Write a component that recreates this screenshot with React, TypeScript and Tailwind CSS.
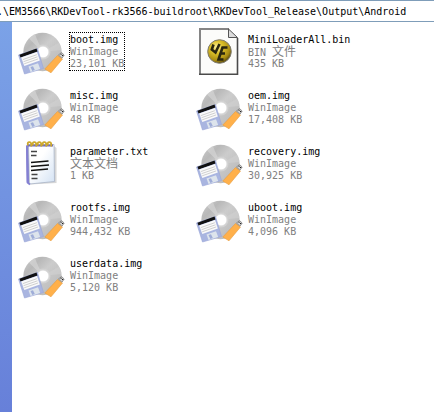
import { useState } from "react";

type Kind = "image" | "bin" | "text";
type FileEntry = { name: string; type: string; size: string; kind: Kind };

const files: FileEntry[] = [
  { name: "boot.img", type: "WinImage", size: "23,101 KB", kind: "image" },
  { name: "MiniLoaderAll.bin", type: "BIN 文件", size: "435 KB", kind: "bin" },
  { name: "misc.img", type: "WinImage", size: "48 KB", kind: "image" },
  { name: "oem.img", type: "WinImage", size: "17,408 KB", kind: "image" },
  { name: "parameter.txt", type: "文本文档", size: "1 KB", kind: "text" },
  { name: "recovery.img", type: "WinImage", size: "30,925 KB", kind: "image" },
  { name: "rootfs.img", type: "WinImage", size: "944,432 KB", kind: "image" },
  { name: "uboot.img", type: "WinImage", size: "4,096 KB", kind: "image" },
  { name: "userdata.img", type: "WinImage", size: "5,120 KB", kind: "image" },
];

function Gradients() {
  return (
    <svg className="absolute size-0" aria-hidden="true">
      <defs>
        <linearGradient id="disc" x1="0" y1="0" x2="1" y2="1">
          <stop offset="0" stopColor="#cdcdcd" />
          <stop offset="0.25" stopColor="#b8b8b8" />
          <stop offset="0.45" stopColor="#cccccc" />
          <stop offset="0.6" stopColor="#c6c6c6" />
          <stop offset="1" stopColor="#b4b4b4" />
        </linearGradient>
        <linearGradient id="paper" x1="0" y1="0" x2="1" y2="1">
          <stop offset="0.4" stopColor="#ffffff" />
          <stop offset="1" stopColor="#d3e2f4" />
        </linearGradient>
        <radialGradient id="ball" cx="0.38" cy="0.32" r="0.75">
          <stop offset="0" stopColor="#fff3a0" />
          <stop offset="0.35" stopColor="#dcc02a" />
          <stop offset="0.75" stopColor="#a88b12" />
          <stop offset="1" stopColor="#3c3208" />
        </radialGradient>
      </defs>
    </svg>
  );
}

function ImageIcon() {
  return (
    <svg viewBox="0 0 48 48" className="size-12 shrink-0" aria-hidden="true">
      <circle cx="24.5" cy="25" r="19.2" fill="url(#disc)" />
      <path d="M24.5 25 11 11.600A19 19 0 0 1 17 7.500Z" fill="#d8d8d8" opacity="0.6" />
      <path d="M24.5 25 41 15.500A19 19 0 0 1 43.400 23Z" fill="#d4d4d4" opacity="0.5" />
      <circle cx="25" cy="25" r="7.5" fill="#d2d2d2" />
      <circle cx="25" cy="25" r="5.8" fill="#ffffff" stroke="#dddddd" strokeWidth="0.6" />
      <path d="M0.500 28 19.500 21.500 25.500 41.500 6.500 47Z" fill="#a9b5e0" stroke="#98a5d6" strokeWidth="0.6" />
      <path d="M1.500 27.700 18.500 21.500 19.500 24.500 2.500 30.500Z" fill="#111111" />
      <path d="M3.200 30.600 19 25 21.800 33.500 6.300 39Z" fill="#fafafa" />
      <path d="M4.800 32.600 18.800 27.700M5.500 34.700 19.500 29.800M6.200 36.800 20.200 31.900" stroke="#bdbdbd" strokeWidth="0.7" />
      <path d="M10.500 39.500 20 36.200 22.200 42 12.500 45Z" fill="#dde4ec" />
      <path d="M12.500 40 15 39.200 16.800 43 14.300 43.900Z" fill="#9fadd8" />
      <path d="M39.500 28.500 44.500 32 33 45.800 26.800 42Z" fill="#ffb04a" stroke="#e79a3a" strokeWidth="0.6" />
      <path d="M40.500 28 43.500 25.500 46.200 28 44 31.200Z" fill="#d0d0d0" stroke="#777777" strokeWidth="0.7" />
      <path d="M42.500 27.200h1.200M44 28.500h1.200" stroke="#222222" />
    </svg>
  );
}

function BinIcon() {
  return (
    <svg viewBox="0 0 48 48" className="size-12 shrink-0" aria-hidden="true">
      <path d="M4 2H32.500L41 10.500V47H4Z" fill="#fcfcfa" />
      <path d="M33 2H4V47" fill="none" stroke="#858585" strokeWidth="2" />
      <path d="M3 47.500H42" stroke="#4a4a4a" strokeWidth="2" />
      <path d="M41.500 11V48" stroke="#4a4a4a" strokeWidth="1.600" />
      <path d="M32.500 2V10.500H41.500Z" fill="#dcdcdc" stroke="#555555" />
      <circle cx="23.500" cy="24.500" r="11.800" fill="url(#ball)" stroke="#807c70" strokeWidth="1" />
      <path d="M17.500 17.500 15.800 22.500 19.500 25.500 23.500 17" fill="none" stroke="#2a260f" strokeWidth="2.600" />
      <path d="M31.500 20.500H26.500L22.500 32.500H27.500M25 26.500H29" fill="none" stroke="#2a260f" strokeWidth="2.600" />
    </svg>
  );
}

function TextIcon() {
  return (
    <svg viewBox="0 0 48 48" className="size-12 shrink-0" aria-hidden="true">
      <path d="M12 45.500 38.500 44V9L36 7Z" fill="#bdbdbd" opacity="0.6" />
      <path d="M8 7 11 4.500V45L8.800 43Z" fill="#8480d2" />
      <path d="M10.500 5.500 36 5.500 36.500 42.500 11.500 45Z" fill="url(#paper)" stroke="#a9b5c8" strokeWidth="0.8" />
      <path d="M9 6.500 9.500 43.500 12 45.500" fill="none" stroke="#8480d2" strokeWidth="1.800" />
      <path d="M10 6.500H35" stroke="#6d68c0" strokeWidth="2" />
      {[11, 16, 21, 26, 31].map((x) => (
        <path key={x} d={`M${x - 1} 6.500Q${x - 2} 3 ${x + 0.5} 3.200T${x + 2} 7.500`} fill="none" stroke="#cda92c" strokeWidth="1.800" />
      ))}
      <path d="M13 12.500H19M13 16.500H18.500M13.500 35.500H19.500M13.500 39.500H19.500" stroke="#444444" strokeWidth="1.300" />
      <path d="M13 23.500 30.500 22M13 27.500 31 26M13 31.500 30 30" stroke="#111111" strokeWidth="1.300" />
    </svg>
  );
}

const icons = { image: ImageIcon, bin: BinIcon, text: TextIcon };

/* Chinese glyphs are two Latin cells wide, so they get a larger size. */
function Mixed({ text }: { text: string }) {
  const parts = text.split(/([\u4e00-\u9fff]+)/).filter(Boolean);
  return (
    <>
      {parts.map((part, i) => (
        <span key={i} className={/[\u4e00-\u9fff]/.test(part) ? "text-[12px] leading-[12px]" : ""}>
          {part}
        </span>
      ))}
    </>
  );
}

export default function App() {
  const [selected, setSelected] = useState("boot.img");
  return (
    <div className="flex min-h-screen flex-col bg-white font-['DejaVu_Sans_Mono','Noto_Sans_CJK_SC',monospace] text-[10px] leading-[12px] text-black">
      <Gradients />
      <header className="flex h-[22px] items-center overflow-hidden border-y border-[#7f9db9] pt-0.5">
        <input
          aria-label="Address"
          readOnly
          value=".\EM3566\RKDevTool-rk3566-buildroot\RKDevTool_Release\Output\Android"
          className="-ml-[3px] h-4 min-w-0 flex-1 bg-transparent leading-4 outline-none"
        />
      </header>
      <div className="flex flex-1">
        <aside className="w-3 shrink-0 bg-linear-to-b from-[#7ba2e7] to-[#6780d9]" />
        <main className="flex-1 px-1.5 pt-[5px]">
          <ul className="grid grid-cols-[repeat(auto-fill,178px)] gap-y-2">
            {files.map((file) => {
              const Icon = icons[file.kind];
              return (
                <li key={file.name}>
                  <button
                    type="button"
                    aria-pressed={selected === file.name}
                    onClick={() => setSelected(file.name)}
                    className="flex items-center gap-[3px] text-left outline-none"
                  >
                    <Icon />
                    <span
                      className={`flex flex-col border border-dotted pt-px whitespace-nowrap ${
                        selected === file.name ? "border-black" : "border-transparent"
                      }`}
                    >
                      <span className="h-3">{file.name}</span>
                      <span className="h-3 text-[#808080]">
                        <Mixed text={file.type} />
                      </span>
                      <span className="h-3 text-[#808080]">{file.size}</span>
                    </span>
                  </button>
                </li>
              );
            })}
          </ul>
        </main>
      </div>
    </div>
  );
}
